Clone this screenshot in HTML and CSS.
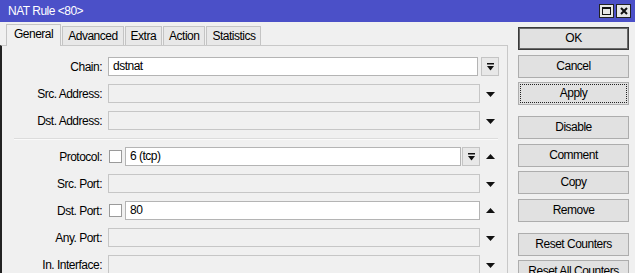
FILE: index.html
```html
<!DOCTYPE html>
<html lang="en">

<head>
    <meta charset="UTF-8">
    <title>NAT Rule &lt;80&gt;</title>
    <link rel="stylesheet" href="styles.css">
</head>

<body>
    <div class="window">
        <!-- title bar -->
        <div class="titlebar">
            <span class="title">NAT Rule &lt;80&gt;</span>
            <div class="title-btns">
                <span class="tbtn">
                    <svg width="9" height="8" viewBox="0 0 9 8"><rect x="0.5" y="0.5" width="8" height="7" fill="none" stroke="#111"/><rect x="0" y="0" width="9" height="2" fill="#111"/></svg>
                </span>
                <span class="tbtn">
                    <svg width="8" height="8" viewBox="0 0 8 8"><path d="M1 1 L7 7 M7 1 L1 7" stroke="#111" stroke-width="2"/></svg>
                </span>
            </div>
        </div>

        <div class="body">
            <div class="main">
                <div class="tabs">
                    <div class="tab active">General</div>
                    <div class="tab">Advanced</div>
                    <div class="tab">Extra</div>
                    <div class="tab">Action</div>
                    <div class="tab">Statistics</div>
                </div>

                <div class="pane">
                    <div class="row">
                        <div class="label">Chain:</div>
                        <div class="field">
                            <div class="input white chain">dstnat</div>
                        </div>
                        <div class="arrow">
                            <span class="dd-btn"><svg width="7" height="8" viewBox="0 0 7 8"><rect x="0" y="0" width="7" height="1.5" fill="#111"/><path d="M0 3 L7 3 L3.5 7.5 Z" fill="#111"/></svg></span>
                        </div>
                    </div>
                    <div class="row">
                        <div class="label">Src. Address:</div>
                        <div class="field"><div class="input"></div></div>
                        <div class="arrow"><svg class="down" width="9" height="5" viewBox="0 0 9 5"><path d="M0 0 L9 0 L4.5 5 Z" fill="#111"/></svg></div>
                    </div>
                    <div class="row">
                        <div class="label">Dst. Address:</div>
                        <div class="field"><div class="input"></div></div>
                        <div class="arrow"><svg class="down" width="9" height="5" viewBox="0 0 9 5"><path d="M0 0 L9 0 L4.5 5 Z" fill="#111"/></svg></div>
                    </div>

                    <div class="sep"></div>

                    <div class="row">
                        <div class="label">Protocol:</div>
                        <div class="field">
                            <span class="check"></span>
                            <div class="input white">6 (tcp)</div>
                            <span class="dd-btn inline"><svg width="7" height="8" viewBox="0 0 7 8"><rect x="0" y="0" width="7" height="1.5" fill="#111"/><path d="M0 3 L7 3 L3.5 7.5 Z" fill="#111"/></svg></span>
                        </div>
                        <div class="arrow"><svg width="9" height="5" viewBox="0 0 9 5"><path d="M0 5 L9 5 L4.5 0 Z" fill="#111"/></svg></div>
                    </div>
                    <div class="row">
                        <div class="label">Src. Port:</div>
                        <div class="field"><div class="input"></div></div>
                        <div class="arrow"><svg class="down" width="9" height="5" viewBox="0 0 9 5"><path d="M0 0 L9 0 L4.5 5 Z" fill="#111"/></svg></div>
                    </div>
                    <div class="row">
                        <div class="label">Dst. Port:</div>
                        <div class="field">
                            <span class="check"></span>
                            <div class="input white">80</div>
                        </div>
                        <div class="arrow"><svg width="9" height="5" viewBox="0 0 9 5"><path d="M0 5 L9 5 L4.5 0 Z" fill="#111"/></svg></div>
                    </div>
                    <div class="row">
                        <div class="label">Any. Port:</div>
                        <div class="field"><div class="input"></div></div>
                        <div class="arrow"><svg class="down" width="9" height="5" viewBox="0 0 9 5"><path d="M0 0 L9 0 L4.5 5 Z" fill="#111"/></svg></div>
                    </div>
                    <div class="row">
                        <div class="label">In. Interface:</div>
                        <div class="field"><div class="input"></div></div>
                        <div class="arrow"><svg class="down" width="9" height="5" viewBox="0 0 9 5"><path d="M0 0 L9 0 L4.5 5 Z" fill="#111"/></svg></div>
                    </div>
                </div>
            </div>

            <!-- buttons on the right -->
            <div class="actions">
                <div class="btn default">OK</div>
                <div class="btn">Cancel</div>
                <div class="btn focus">Apply</div>
                <div class="btn group-start">Disable</div>
                <div class="btn">Comment</div>
                <div class="btn">Copy</div>
                <div class="btn">Remove</div>
                <div class="btn group-start">Reset Counters</div>
                <div class="btn">Reset All Counters</div>
            </div>
        </div>
    </div>
</body>

</html>
```

FILE: styles.css
```css
/* page */
body {
    margin: 0;
    padding: 0;
    background: #fff;
    font-family: "Liberation Sans", Arial, sans-serif;
    font-size: 12px;
    letter-spacing: -0.5px;
    color: #000;
    overflow: hidden;
}

.window {
    width: 635px;
    height: 273px;
    background: #f0f0f0;
    overflow: hidden;
}

/* title bar */
.titlebar {
    height: 22px;
    background: #4b50c8;
    display: flex;
    align-items: center;
    justify-content: space-between;
    padding: 0 4px 0 8px;
}

.title {
    color: #fff;
}

.title-btns {
    display: flex;
    gap: 2px;
}

.tbtn {
    width: 13px;
    height: 12px;
    border: 1px solid #222;
    background: #e6e6e6;
    display: flex;
    align-items: center;
    justify-content: center;
}

/* main area */
.body {
    display: flex;
    align-items: flex-start;
}

.main {
    width: 508px;
    flex-shrink: 0;
}

.tabs {
    height: 23px;
    display: flex;
    align-items: flex-end;
    padding-left: 6px;
    gap: 1px;
}

.tab {
    height: 18px;
    line-height: 19px;
    padding: 0 5px;
    border: 1px solid #c4c4c4;
    border-bottom: none;
    background: #e8e8e8;
}

.tab.active {
    height: 21px;
    line-height: 19px;
    padding: 0 7px;
    background: #f0f0f0;
    margin-bottom: -1px;
    position: relative;
}

.pane {
    height: 240px;
    border-top: 1px solid #c8c8c8;
    border-left: 2px solid #222;
    border-right: 1px solid #c8c8c8;
    padding-top: 11px;
}

.row {
    display: flex;
    align-items: center;
    height: 19px;
    margin-bottom: 8px;
}

.label {
    width: 100px;
    text-align: right;
    margin-right: 6px;
    flex-shrink: 0;
}

.field {
    width: 372px;
    height: 19px;
    display: flex;
    align-items: center;
}

.input {
    flex: 1;
    height: 17px;
    line-height: 17px;
    padding-left: 4px;
    border: 1px solid #c6c6c6;
    background: #f0f0f0;
}

.input.white {
    background: #fff;
    border-color: #b4b4b4;
}

.input.chain {
    margin-right: 2px;
}

.check {
    width: 11px;
    height: 11px;
    border: 1px solid #9a9a9a;
    background: #fff;
    margin: 0 3px 0 1px;
    flex-shrink: 0;
}

.arrow {
    width: 18px;
    height: 19px;
    display: flex;
    align-items: center;
    justify-content: center;
    margin-left: 1px;
}

.arrow svg.down {
    margin-top: 1px;
}

.dd-btn {
    width: 16px;
    height: 17px;
    border: 1px solid #c4c4c4;
    background: #e8e8e8;
    display: flex;
    align-items: center;
    justify-content: center;
    flex-shrink: 0;
}

.dd-btn.inline {
    margin-left: 1px;
}

.sep {
    height: 1px;
    background: #dcdcdc;
    border-bottom: 1px solid #fafafa;
    margin: 1px 9px 7px 12px;
}

/* right buttons */
.actions {
    width: 111px;
    margin-left: 10px;
    padding-top: 5px;
}

.btn {
    height: 21px;
    line-height: 21px;
    text-align: center;
    border: 1px solid #adadad;
    background: #e1e1e1;
    margin-bottom: 4.5px;
}

.btn.default {
    border-color: #3a3a3a;
    box-shadow: inset 0 0 0 1px #6a6a6a;
}

.btn.focus {
    outline: 1px dotted #222;
    outline-offset: -3px;
}

.btn.group-start {
    margin-top: 11px;
}
```
